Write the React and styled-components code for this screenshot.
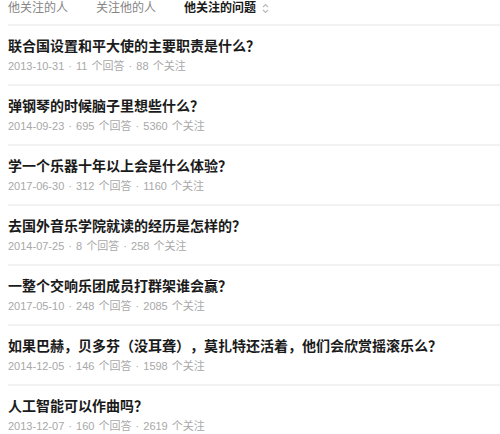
import React from "react";
import styled, { createGlobalStyle } from "styled-components";

const Global = createGlobalStyle`
  html, body { margin: 0; padding: 0; background: #fff; }
  body {
    font-family: "Liberation Sans", "Noto Sans CJK SC", sans-serif;
    text-spacing-trim: space-all;
  }
`;

const Page = styled.div`
  width: 500px;
  padding: 0 0 0 8px;
  box-sizing: border-box;
`;

const Tabs = styled.div`
  display: flex;
  align-items: flex-start;
  gap: 28px;
  height: 24px;
`;

const Tab = styled.div`
  display: flex;
  align-items: center;
  gap: 6px;
  font-size: 12px;
  line-height: 17px;
  color: ${(p) => (p.$active ? "#1a1a1a" : "#858585")};
  font-weight: ${(p) => (p.$active ? 700 : 400)};
`;

const List = styled.div`
  display: flex;
  flex-direction: column;
`;

const Row = styled.div`
  border-top: 2px solid #f2f2f2;
  padding: 10px 0 8px;
  display: flex;
  flex-direction: column;
`;

const Title = styled.div`
  font-size: 14px;
  line-height: 20px;
  font-weight: 700;
  color: #1a1a1a;
  text-spacing-trim: space-all;
`;

const Meta = styled.div`
  font-size: 11px;
  line-height: 20px;
  color: #a8a8a8;
  word-spacing: 1px;
`;

const SortIcon = () => (
  <svg width="7" height="11" viewBox="0 0 7 11" fill="none" stroke="#b8b8b8" strokeWidth="1.1">
    <path d="M1 4 L3.5 1.5 L6 4" />
    <path d="M1 7 L3.5 9.5 L6 7" />
  </svg>
);

const items = [
  ["联合国设置和平大使的主要职责是什么？", "2013-10-31", 11, 88],
  ["弹钢琴的时候脑子里想些什么？", "2014-09-23", 695, 5360],
  ["学一个乐器十年以上会是什么体验？", "2017-06-30", 312, 1160],
  ["去国外音乐学院就读的经历是怎样的？", "2014-07-25", 8, 258],
  ["一整个交响乐团成员打群架谁会赢？", "2017-05-10", 248, 2085],
  ["如果巴赫，贝多芬（没耳聋），莫扎特还活着，他们会欣赏摇滚乐么？", "2014-12-05", 146, 1598],
  ["人工智能可以作曲吗？", "2013-12-07", 160, 2619],
];

export default function App() {
  return (
    <>
      <Global />
      <Page>
        <Tabs>
          <Tab>他关注的人</Tab>
          <Tab>关注他的人</Tab>
          <Tab $active>
            他关注的问题 <SortIcon />
          </Tab>
        </Tabs>
        <List>
          {items.map(([t, d, a, f]) => (
            <Row key={t}>
              <Title>{t}</Title>
              <Meta>
                {d} · {a} 个回答 · {f} 个关注
              </Meta>
            </Row>
          ))}
        </List>
      </Page>
    </>
  );
}
